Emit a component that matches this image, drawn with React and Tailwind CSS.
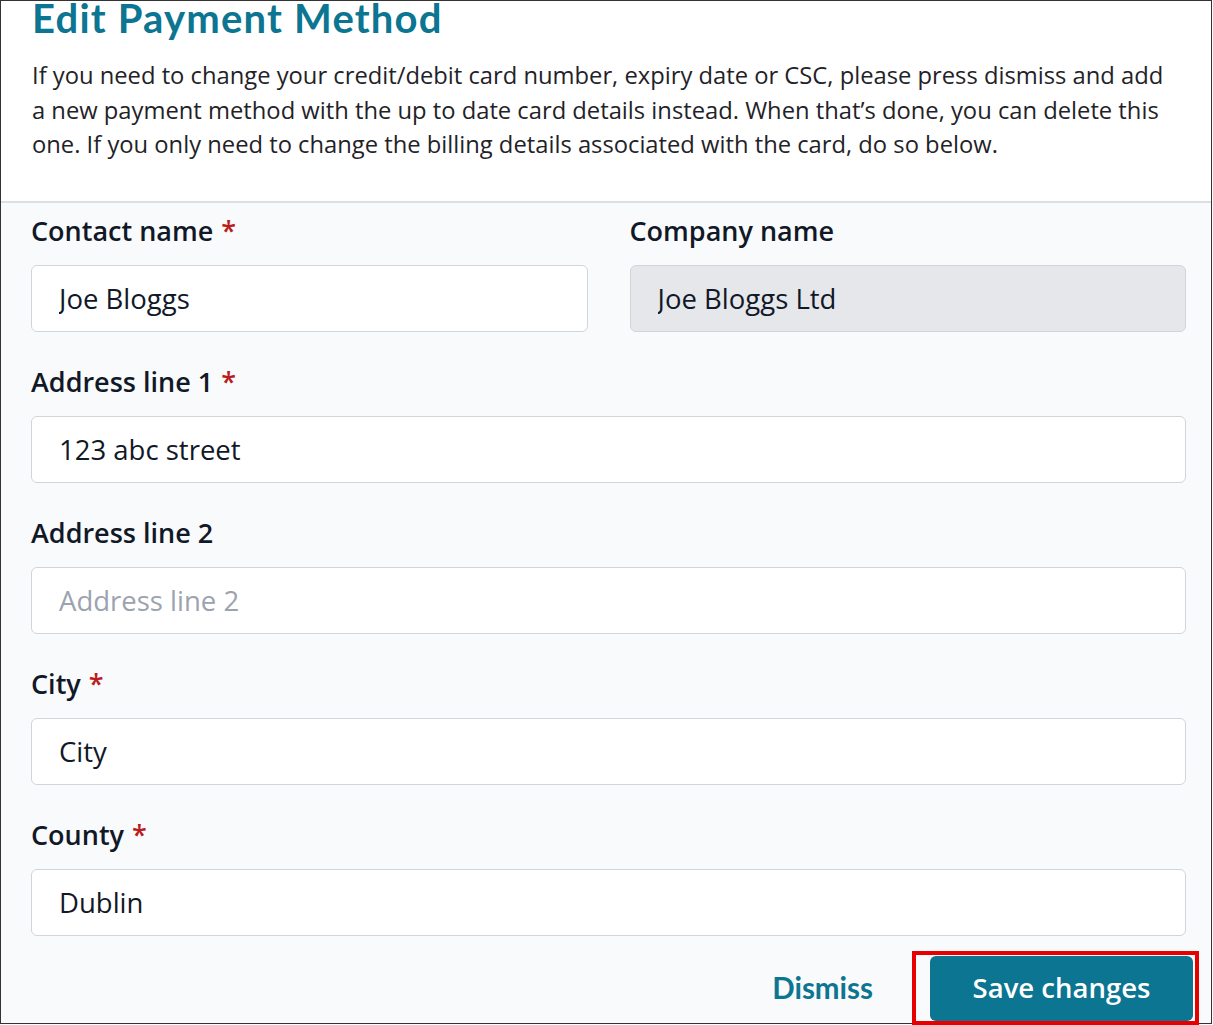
import React from "react";

const fields = [
  { name: "address1", label: "Address line 1", required: true, value: "123 abc street" },
  { name: "address2", label: "Address line 2", required: false, placeholder: "Address line 2" },
  { name: "city", label: "City", required: true, value: "City" },
  { name: "county", label: "County", required: true, value: "Dublin" },
];

const Label = ({ children, required }) => (
  <label className="block text-[27px] leading-[34px] font-semibold text-[#111827]">
    {children}
    {required && <span className="text-[#b91c1c] ml-[8px]">*</span>}
  </label>
);

const TextInput = ({ value, placeholder, disabled }) => (
  <input
    defaultValue={value}
    placeholder={placeholder}
    disabled={disabled}
    className={`mt-[17px] block w-full h-[67px] rounded-[6px] border border-[#d1d5db] pl-[27px] text-[27.5px] text-[#111827] placeholder-[#9ca3af] outline-none ${
      disabled ? "bg-[#e5e7eb]" : "bg-white"
    }`}
  />
);

const App = () => {
  return (
    <div
      className="relative w-[1213px] h-[1025px] bg-white"
      style={{ fontFamily: '"Open Sans", "Noto Sans", sans-serif' }}
    >
      <div className="w-[1212px] h-[1024px] border border-[#333] overflow-hidden flex flex-col">
        {/* header */}
        <div className="bg-white pl-[31px] pr-[30px]">
          <h1
            className="text-[40px] leading-[35px] font-bold tracking-[1.2px] text-[#0c7591]"
            style={{ fontFamily: "Lato, sans-serif" }}
          >
            Edit Payment Method
          </h1>
          <p className="mt-[22px] mb-[39px] text-[23.75px] leading-[34.5px] text-[#1f2328]">
            If you need to change your credit/debit card number, expiry date or CSC, please press
            dismiss and add a new payment method with the up to date card details instead. When
            that’s done, you can delete this one. If you only need to change the billing details
            associated with the card, do so below.
          </p>
        </div>

        {/* form */}
        <form className="flex-1 bg-[#f9fafb] border-t-2 border-[#dcdfe4] pl-[30px] pr-[25px] pt-[11px]">
          <div className="grid grid-cols-2 gap-x-[42px]">
            <div>
              <Label required>Contact name</Label>
              <TextInput value="Joe Bloggs" />
            </div>
            <div>
              <Label>Company name</Label>
              <TextInput value="Joe Bloggs Ltd" disabled />
            </div>
          </div>

          {fields.map((f) => (
            <div key={f.name} className="mt-[33px]">
              <Label required={f.required}>{f.label}</Label>
              <TextInput value={f.value} placeholder={f.placeholder} />
            </div>
          ))}

          <div className="mt-[20px] flex items-center justify-end gap-[57px] -mr-[7px]">
            <button
              type="button"
              className="text-[29.5px] font-bold text-[#0c7591]"
              style={{ fontFamily: "Lato, sans-serif" }}
            >
              Dismiss
            </button>
            <button
              type="submit"
              className="w-[263px] h-[65px] rounded-[6px] bg-[#0c7591] text-white text-[27.5px] font-semibold"
            >
              Save changes
            </button>
          </div>
        </form>
      </div>

      {/* annotation highlight */}
      <div className="absolute left-[912px] top-[951px] w-[287px] h-[74px] border-4 border-[#e60000]" />
    </div>
  );
};

export default App;
